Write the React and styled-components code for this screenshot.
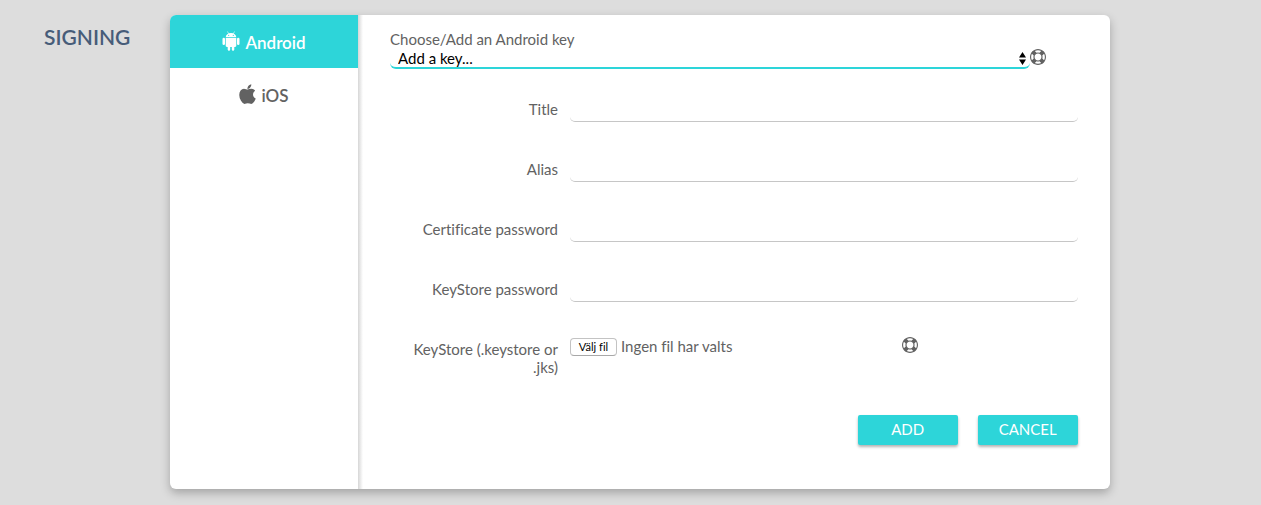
import React, { useState } from "react";
import styled, { createGlobalStyle } from "styled-components";

const teal = "#2dd5d9";
const ink = "#626262";

const GlobalStyle = createGlobalStyle`
  *, *::before, *::after { box-sizing: border-box; }
  body {
    margin: 0;
    background: #dddddd;
    color: ${ink};
    font: 400 15px/18px Lato, sans-serif;
    font-variant-ligatures: none;
  }
  button, input, select { font: inherit; color: inherit; }
`;

const Page = styled.main`
  display: grid;
  grid-template-columns: 170px minmax(0, 1fr);
  padding: 15px 12% 16px 0;
`;

const Heading = styled.h1`
  margin: 0;
  padding: 10px 0 0 44px;
  font-size: 21px;
  line-height: 24px;
  font-weight: 600;
  color: #475c79;
`;

const Card = styled.section`
  display: grid;
  grid-template-columns: 188px minmax(0, 1fr);
  background: #fff;
  border-radius: 6px;
  box-shadow: 0 4px 10px rgba(0, 0, 0, 0.26);
  overflow: hidden;
`;

const Tabs = styled.nav`
  display: flex;
  flex-direction: column;
`;

const Tab = styled.button`
  display: flex;
  align-items: center;
  justify-content: center;
  gap: 5px;
  height: 53px;
  border: 0;
  padding: 2px 0 0;
  font-size: 17px;
  font-weight: 600;
  cursor: pointer;
  color: ${(p) => (p.$active ? "#fff" : ink)};
  background: ${(p) => (p.$active ? teal : "#fff")};

  svg { margin-bottom: 4px; }
`;

const Form = styled.form`
  padding: 15px 32px 44px;
  background: linear-gradient(90deg, #d6d6d6, #fff) 0 0 / 5px 100% no-repeat;
`;

const KeyPicker = styled.div`
  display: grid;
  grid-template-columns: minmax(0, 1fr) 48px;
  margin-bottom: 23px;
`;

const KeyLabel = styled.label`
  grid-column: 1 / -1;
`;

const SelectBox = styled.div`
  display: grid;
  align-items: center;

  > * { grid-area: 1 / 1; }
  > svg { justify-self: end; margin-right: 4px; pointer-events: none; }
`;

const Select = styled.select`
  appearance: none;
  width: 100%;
  height: 21px;
  border: 0;
  border-bottom: 2px solid ${teal};
  border-radius: 6px;
  padding: 0 16px 0 8px;
  background: transparent;
  color: #000;
  line-height: 18px;
  outline: 0;
`;

const HelpButton = styled.button`
  display: flex;
  align-self: start;
  width: 16px;
  height: 16px;
  margin-top: 1px;
  padding: 0;
  border: 0;
  background: none;
  cursor: pointer;
`;

const Row = styled.div`
  display: grid;
  grid-template-columns: 168px minmax(0, 1fr);
  column-gap: 12px;
  margin-bottom: 30px;
`;

const FieldLabel = styled.label`
  padding: 8px 0 0 16px;
  text-align: right;
`;

const Input = styled.input`
  width: 100%;
  height: 30px;
  border: 0;
  border-bottom: 1px solid #c6c6c6;
  border-radius: 5px;
  padding: 0 8px;
  background: transparent;
  outline: 0;
`;

const FileCell = styled.div`
  display: grid;
  grid-template-columns: minmax(0, 1fr) 176px;
  align-items: start;
  padding-top: 4px;
`;

const FilePicker = styled.label`
  display: flex;
  align-items: center;
  gap: 4px;
  height: 20px;
  cursor: pointer;
`;

const HiddenFile = styled.input`
  position: absolute;
  width: 1px;
  height: 1px;
  opacity: 0;
`;

const FileButton = styled.span`
  width: 47px;
  height: 18px;
  margin-top: 2px;
  border: 1px solid #c3c3c3;
  border-bottom-color: #a8a8a8;
  border-radius: 4px;
  background: #fff;
  color: #000;
  text-align: center;
  font-size: 11px;
  line-height: 16px;
`;

const Actions = styled.div`
  display: flex;
  justify-content: flex-end;
  gap: 20px;
  padding-top: 9px;
`;

const Action = styled.button`
  width: 100px;
  height: 30px;
  border: 0;
  border-radius: 2px;
  padding: 0 0 2px;
  background: ${teal};
  color: #fff;
  box-shadow: 0 2px 3px rgba(0, 0, 0, 0.3);
  cursor: pointer;
`;

const AndroidIcon = () => (
  <svg width="18" height="20" viewBox="0 0 18 20" fill="currentColor" aria-hidden="true">
    <path d="M5.600 .8l1 1.800M12.400 .8l-1 1.800" stroke="currentColor" strokeWidth=".6" strokeLinecap="round" />
    <path fillRule="evenodd" d="M3.700 6.300C3.900 3.700 6 2 9 2s5.100 1.700 5.300 4.300zM6.700 3.700a.6.6 0 1 0 0 1.200.6.6 0 0 0 0-1.200zm4.600 0a.6.6 0 1 0 0 1.200.6.6 0 0 0 0-1.200z" />
    <path d="M3.700 6.900h10.600v7.900c0 .7-.5 1.200-1.200 1.200h-.8v2.400a1.250 1.250 0 0 1-2.500 0V16H8.200v2.400a1.250 1.250 0 0 1-2.500 0V16h-.8c-.7 0-1.200-.5-1.200-1.200z" />
    <rect x=".5" y="6.700" width="2.500" height="7.300" rx="1.250" />
    <rect x="15" y="6.700" width="2.500" height="7.300" rx="1.250" />
  </svg>
);

const AppleIcon = () => (
  <svg width="17" height="20" viewBox="46 -20 1393 1690" fill="currentColor" aria-hidden="true">
    <path d="M1439 1215q-39 125-123 250-129 196-257 196-49 0-140-32-86-32-151-32-61 0-142 33-81 34-132 34-152 0-301-259-147-261-147-503 0-228 113-374 113-144 284-144 72 0 175 30 102 30 138 30 45 0 143-34 102-34 173-34 119 0 213 65 52 36 104 100-79 67-114 118-65 94-65 207 0 124 69 223t158 126zm-376-1173q0 61-29 136-30 75-93 138-54 54-108 72-37 11-104 17 3-149 78-257 74-107 250-148 1 3 2.500 11t2.500 11q0 4 .5 10t.5 10z" />
  </svg>
);

const LifeRing = () => (
  <svg width="16" height="16" viewBox="0 0 1792 1792" fill="currentColor" aria-hidden="true">
    <path d="M896 0q182 0 348 71t286 191 191 286 71 348-71 348-191 286-286 191-348 71-348-71-286-191-191-286-71-348 71-348 191-286 286-191 348-71zm0 128q-190 0-361 90l194 194q82-28 167-28t167 28l194-194q-171-90-361-90zm-678 1129l194-194q-28-82-28-167t28-167l-194-194q-90 171-90 361t90 361zm678 407q190 0 361-90l-194-194q-82 28-167 28t-167-28l-194 194q171 90 361 90zm0-384q159 0 271.500-112.500t112.500-271.500-112.500-271.500-271.500-112.500-271.500 112.500-112.500 271.500 112.500 271.500 271.500 112.500zm484-217l194 194q90-171 90-361t-90-361l-194 194q28 82 28 167t-28 167z" />
  </svg>
);

const UpDown = () => (
  <svg width="7" height="13" viewBox="0 0 7 13" aria-hidden="true">
    <path d="M3.500 0L7 5.500H0zM3.500 13L7 7.500H0z" />
  </svg>
);

const fields = [
  { id: "title", label: "Title", type: "text" },
  { id: "alias", label: "Alias", type: "text" },
  { id: "cert-password", label: "Certificate password", type: "password" },
  { id: "store-password", label: "KeyStore password", type: "password" },
];

export default function App() {
  const [platform, setPlatform] = useState("android");
  const [fileName, setFileName] = useState("");

  return (
    <>
      <GlobalStyle />
      <Page>
        <Heading>SIGNING</Heading>
        <Card>
          <Tabs>
            <Tab type="button" $active={platform === "android"} onClick={() => setPlatform("android")}>
              <AndroidIcon />
              Android
            </Tab>
            <Tab type="button" $active={platform === "ios"} onClick={() => setPlatform("ios")}>
              <AppleIcon />
              iOS
            </Tab>
          </Tabs>
          <Form onSubmit={(e) => e.preventDefault()}>
            <KeyPicker>
              <KeyLabel htmlFor="key">Choose/Add an Android key</KeyLabel>
              <SelectBox>
                <Select id="key">
                  <option>Add a key...</option>
                </Select>
                <UpDown />
              </SelectBox>
              <HelpButton type="button" aria-label="Help with keys">
                <LifeRing />
              </HelpButton>
            </KeyPicker>
            {fields.map((f) => (
              <Row key={f.id}>
                <FieldLabel htmlFor={f.id}>{f.label}</FieldLabel>
                <Input id={f.id} type={f.type} />
              </Row>
            ))}
            <Row>
              <FieldLabel htmlFor="keystore">KeyStore (.keystore or .jks)</FieldLabel>
              <FileCell>
                <FilePicker>
                  <HiddenFile
                    id="keystore"
                    type="file"
                    accept=".keystore,.jks"
                    onChange={(e) => setFileName(e.target.files[0]?.name ?? "")}
                  />
                  <FileButton>Välj fil</FileButton>
                  <span>{fileName || "Ingen fil har valts"}</span>
                </FilePicker>
                <HelpButton type="button" aria-label="Help with keystore files">
                  <LifeRing />
                </HelpButton>
              </FileCell>
            </Row>
            <Actions>
              <Action type="submit">ADD</Action>
              <Action type="button">CANCEL</Action>
            </Actions>
          </Form>
        </Card>
      </Page>
    </>
  );
}
